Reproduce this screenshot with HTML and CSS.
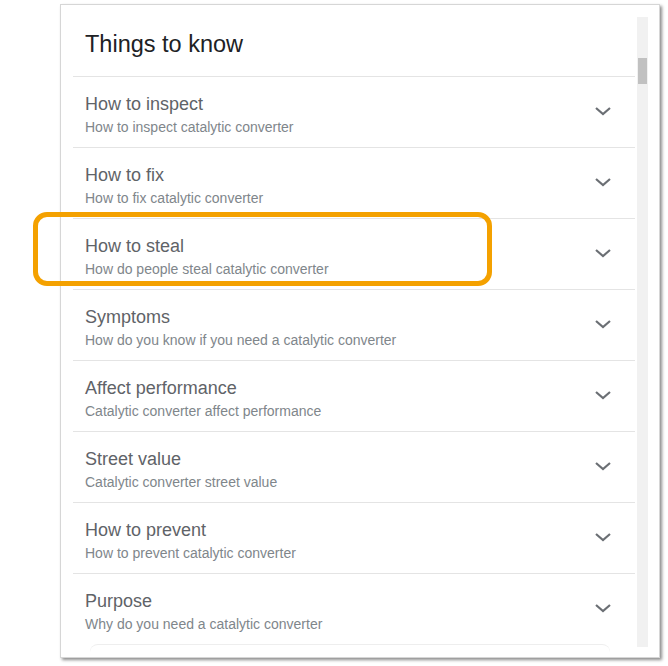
FILE: index.html
```html
<!DOCTYPE html>
<html>
<head>
<meta charset="utf-8">
<link rel="stylesheet" href="styles.css">
</head>
<body>
<div class="card">
  <div class="main">
    <div class="header">Things to know</div>
    <div class="item">
      <div class="texts"><div class="t">How to inspect</div><div class="s">How to inspect catalytic converter</div></div>
      <svg class="chev" viewBox="0 0 24 24"><path d="M5 9l7 6 7-6"/></svg>
    </div>
    <div class="item">
      <div class="texts"><div class="t">How to fix</div><div class="s">How to fix catalytic converter</div></div>
      <svg class="chev" viewBox="0 0 24 24"><path d="M5 9l7 6 7-6"/></svg>
    </div>
    <div class="item">
      <div class="texts"><div class="t">How to steal</div><div class="s">How do people steal catalytic converter</div></div>
      <svg class="chev" viewBox="0 0 24 24"><path d="M5 9l7 6 7-6"/></svg>
    </div>
    <div class="item">
      <div class="texts"><div class="t">Symptoms</div><div class="s">How do you know if you need a catalytic converter</div></div>
      <svg class="chev" viewBox="0 0 24 24"><path d="M5 9l7 6 7-6"/></svg>
    </div>
    <div class="item">
      <div class="texts"><div class="t">Affect performance</div><div class="s">Catalytic converter affect performance</div></div>
      <svg class="chev" viewBox="0 0 24 24"><path d="M5 9l7 6 7-6"/></svg>
    </div>
    <div class="item">
      <div class="texts"><div class="t">Street value</div><div class="s">Catalytic converter street value</div></div>
      <svg class="chev" viewBox="0 0 24 24"><path d="M5 9l7 6 7-6"/></svg>
    </div>
    <div class="item">
      <div class="texts"><div class="t">How to prevent</div><div class="s">How to prevent catalytic converter</div></div>
      <svg class="chev" viewBox="0 0 24 24"><path d="M5 9l7 6 7-6"/></svg>
    </div>
    <div class="item">
      <div class="texts"><div class="t">Purpose</div><div class="s">Why do you need a catalytic converter</div></div>
      <svg class="chev" viewBox="0 0 24 24"><path d="M5 9l7 6 7-6"/></svg>
    </div>
    <div class="next"></div>
  </div>
  <div class="scroll"><div class="thumb"></div></div>
</div>
<div class="highlight"></div>
</body>
</html>
```
FILE: styles.css
```css
html, body {
  margin: 0;
  padding: 0;
  background: #ffffff;
}
body {
  width: 668px;
  height: 666px;
  position: relative;
  overflow: hidden;
  font-family: Arial, "Liberation Sans", sans-serif;
}
.card {
  margin: 4px 0 0 60px;
  width: 598px;
  height: 652px;
  border: 1px solid #d6d6d6;
  box-shadow: 2px 2px 3px rgba(0,0,0,0.45);
  background: #fff;
  display: flex;
  overflow: hidden;
}
.main {
  flex: 1;
  padding-left: 12px;
  display: flex;
  flex-direction: column;
}
.header {
  height: 71px;
  box-sizing: border-box;
  padding: 25px 0 0 12px;
  font-size: 23.5px;
  line-height: 28px;
  color: #202124;
}
.item {
  flex: none;
  height: 71px;
  box-sizing: border-box;
  border-top: 1px solid #e4e4e4;
  display: flex;
  align-items: center;
  padding: 0 20px 0 12px;
}
.texts {
  flex: 1;
  padding-top: 4px;
}
.t {
  font-size: 18px;
  line-height: 22px;
  color: #5f6368;
}
.s {
  font-size: 14px;
  line-height: 16px;
  margin-top: 4px;
  color: #80868b;
}
.chev {
  width: 24px;
  height: 24px;
  fill: none;
  stroke: #6b6f74;
  stroke-width: 2.2;
  margin-top: -2px;
}
.next {
  margin: 0 25px 0 17px;
  border-top: 1px solid #eeeeee;
  border-radius: 8px 8px 0 0;
  height: 10px;
}
.scroll {
  width: 11px;
  margin: 12px 11px 10px 2px;
  background: #f1f1f1;
  position: relative;
}
.thumb {
  margin: 41px 1px 0 1px;
  height: 26px;
  background: #c1c1c1;
}
.highlight {
  position: absolute;
  left: 33px;
  top: 212px;
  width: 459px;
  height: 74px;
  box-sizing: border-box;
  border: 5px solid #f4a100;
  border-radius: 14px;
}
```
